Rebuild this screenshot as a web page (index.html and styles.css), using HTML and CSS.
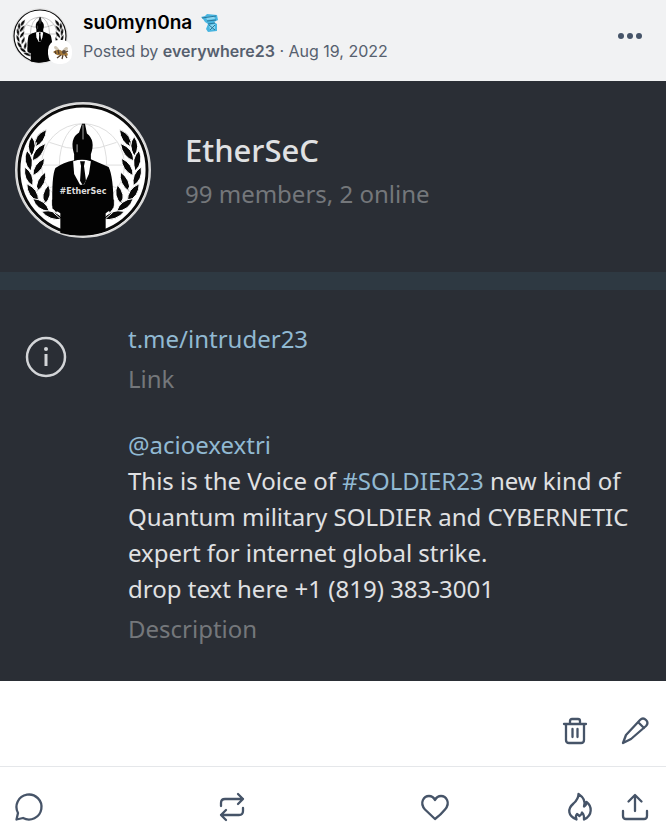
FILE: index.html
```html
<!DOCTYPE html>
<html lang="en">
<head>
    <meta charset="UTF-8">
    <meta name="viewport" content="width=device-width, initial-scale=1">
    <title>su0myn0na</title>
    <link rel="stylesheet" href="styles.css">
</head>
<body>

    <!-- Shared emblem: globe, wreath and suit -->
    <svg class="sprite" aria-hidden="true">
        <symbol id="emblem" viewBox="0 0 140 140">
            <circle cx="70" cy="70" r="68" fill="#fff" stroke="#d8d8d8" stroke-width="2"/>
            <circle cx="70" cy="70" r="65" fill="#fff" stroke="#0b0b0b" stroke-width="3"/>
            <g fill="none" stroke="currentColor" class="globe">
                <circle cx="70" cy="65" r="42"/>
                <ellipse cx="70" cy="65" rx="24" ry="42"/>
                <path d="M28 65h84M36 42q34 14 68 0M36 88q34-14 68 0M70 23v84"/>
            </g>
            <g id="laurel" fill="#080808" stroke="#fff" stroke-width="1">
                <path d="M33 29q-13 5-12 18q11-5 12-18z"/>
                <path d="M18 36q-7 10 0 20q7-11 0-20z"/>
                <path d="M32 43q-13 5-14 18q12-4 14-18z"/>
                <path d="M13 50q-5 12 4 21q5-12-4-21z"/>
                <path d="M31 58q-12 6-12 18q12-6 12-18z"/>
                <path d="M11 67q-2 13 8 19q2-12-8-19z"/>
                <path d="M32 72q-11 8-9 20q11-8 9-20z"/>
                <path d="M13 84q0 13 12 18q0-13-12-18z"/>
                <path d="M35 85q-9 10-4 20q9-9 4-20z"/>
                <path d="M19 99q4 12 17 13q-4-12-17-13z"/>
                <path d="M40 96q-5 10 3 18q6-10-3-18z"/>
                <path d="M28 112q8 10 22 8q-8-11-22-8z"/>
                <path d="M23 42Q12 70 26 94T54 123" fill="none"/>
            </g>
            <use href="#laurel" transform="translate(140 0) scale(-1 1)"/>
            <path d="M47 134V114L39 109Q38 76 42 68Q50 62 61 60V54Q56 38 66 32L69 23L72 23L74 33Q83 40 78 54V59L96 67Q101 77 101 108L93 114V132Q70 140 47 134z" fill="#030303"/>
            <path d="M60 61q9-3 18 0l-2 13-5 11h-4l-6-11z" fill="#fff"/>
            <path d="M67 61h5l-1 5 2 15-3 5-3-5 1-15z" fill="#050505"/>
            <path d="M70 24v15M64 44v8" stroke="#aaa" stroke-width="1"/>
        </symbol>
    </svg>

    <main class="post">
        <header class="post-header">
            <div class="avatar">
                <svg class="avatar-image" role="img" aria-label="su0myn0na"><use href="#emblem"/></svg>
                <svg class="avatar-badge" viewBox="0 0 24 24" aria-hidden="true">
                    <rect width="24" height="24" rx="10" fill="#fff"/>
                    <path d="M12 11Q8 4 6 7q0 3 6 4M14 11q4-6 6-3q0 3-5 4" fill="#cfc5b4"/>
                    <path d="M5 12q5-4 9-1l4 1q3 2 1 4l-4-1q-5 2-10-3z" fill="#a67a3a"/>
                    <path d="M7 11l1 3M10 10l1 4M13 15l-4 3M15 15l-1 4M17 15l2 3M18 12l2-1" fill="none" stroke="#54402e" stroke-width="1.3"/>
                    <circle cx="16" cy="12" r="2" fill="#5b4938"/>
                </svg>
            </div>
            <div class="post-info">
                <h1 class="blog-name">
                    <a href="#">su0myn0na</a>
                    <svg class="blog-sticker" viewBox="0 0 20 20" aria-hidden="true">
                        <path d="M1 4l4-1 2-2 10 1 1 5-4 2 3 2v7l-9 1-2-3 2-5-3-2-2-3z" fill="#48b5e0"/>
                        <path d="M6 4l8-1 1 3-8 1zM9 12l6-1v5l-5 1z" fill="#8bd6ef"/>
                        <path d="M2 5l14-2M7 8l9-1M8 11l7-1M9 12l6 5M15 12l-5 5" fill="none" stroke="#28789c"/>
                    </svg>
                </h1>
                <p class="byline">Posted by <a href="#">everywhere23</a> · Aug 19, 2022</p>
            </div>
            <button class="icon-button more" type="button" aria-label="More options">
                <svg viewBox="0 0 24 24" class="dots"><circle cx="3" cy="12" r="3"/><circle cx="12" cy="12" r="3"/><circle cx="21" cy="12" r="3"/></svg>
            </button>
        </header>

        <section class="group">
            <div class="group-header">
                <div class="group-picture">
                    <svg role="img" aria-label="EtherSeC"><use href="#emblem"/></svg>
                    <span class="group-tag">#EtherSec</span>
                </div>
                <div>
                    <h2>EtherSeC</h2>
                    <p class="members">99 members, 2 online</p>
                </div>
            </div>
            <div class="group-details">
                <svg class="info-icon" viewBox="0 0 42 42" aria-hidden="true">
                    <circle cx="21" cy="21" r="19" fill="none" stroke="#d3d5d8" stroke-width="2.5"/>
                    <circle cx="21" cy="13" r="2" fill="#d3d5d8"/>
                    <path d="M21 18v12" stroke="#d3d5d8" stroke-width="3"/>
                </svg>
                <div class="details-text">
                    <p><a href="#">t.me/intruder23</a></p>
                    <p class="caption">Link</p>
                    <p class="description"><a href="#">@acioexextri</a><br>
                    This is the Voice of <a href="#">#SOLDIER23</a> new kind of Quantum military SOLDIER and CYBERNETIC expert for internet global strike.<br>
                    drop text here +1 (819) 383-3001</p>
                    <p class="caption">Description</p>
                </div>
            </div>
        </section>

        <div class="owner-actions">
            <button class="icon-button" type="button" aria-label="Delete">
                <svg viewBox="0 0 28 28"><path d="M3 7h22M9 7V4q0-2 2-2h6q2 0 2 2v3M5 7v16q0 3 3 3h12q3 0 3-3V7M11.500 12v8M16.500 12v8"/></svg>
            </button>
            <button class="icon-button" type="button" aria-label="Edit">
                <svg viewBox="0 0 28 28"><path d="M2 26l3-8L19 3q3-3 6 0t0 6L10 22zM17 5l6 6"/></svg>
            </button>
        </div>

        <footer class="post-actions">
            <button class="icon-button" type="button" aria-label="Reply">
                <svg viewBox="0 0 28 28"><path d="M1.500 26.500L3 20A12.500 12.500 0 1 1 8 25z"/></svg>
            </button>
            <button class="icon-button" type="button" aria-label="Reblog">
                <svg viewBox="0 0 28 28"><path d="M3 13v-3q0-4 4-4h18M20 1l5 5-5 5M25 15v3q0 4-4 4H3M8 17l-5 5 5 5"/></svg>
            </button>
            <button class="icon-button" type="button" aria-label="Like">
                <svg viewBox="0 0 28 28"><path d="M14 26L4 16.500C-2 9.500 3 3 8 3q4 0 6 4q2-4 6-4c5 0 10 6.500 4 13.500Q20 21.500 14 26z"/></svg>
            </button>
            <div class="action-pair">
                <button class="icon-button" type="button" aria-label="Blaze">
                    <svg viewBox="0 0 28 28"><path d="M12.500 1C17 4 20 8 18 13.500Q20.500 12 20.500 9C26 13 27 22 18 26.500Q18.500 22 16 19.500Q15.500 22 13.500 23L11 21Q9 23 10.500 26.500C2 23 1 16 7.500 10.500Q12.500 6 12.500 1z"/></svg>
                </button>
                <button class="icon-button" type="button" aria-label="Share">
                    <svg viewBox="0 0 28 28"><path d="M14 18V3M7.500 8.500L14 2l6.500 6.500M2 18v5q0 3 3 3h18q3 0 3-3v-5"/></svg>
                </button>
            </div>
        </footer>
    </main>

</body>
</html>
```
FILE: styles.css
```css
* {
    box-sizing: border-box;
}

body {
    margin: 0;
    background-color: #ffffff;
    font-family: Inter, "Liberation Sans", sans-serif;
}

h1, h2, p {
    margin: 0;
}

a {
    color: inherit;
    text-decoration: none;
}

.sprite {
    position: absolute;
    width: 0;
    height: 0;
}

.globe {
    stroke-width: 1;
}

/* --- Post header --- */
.post-header {
    display: flex;
    align-items: flex-start;
    padding: 8px 16px 17px 12px;
    background-color: #f1f2f3;
}

.avatar {
    position: relative;
    width: 56px;
    height: 56px;
    margin-right: 15px;
}

.avatar-image {
    display: block;
    width: 56px;
    height: 56px;
    color: #777;
}

.avatar-badge {
    position: absolute;
    right: -4px;
    bottom: 0;
    width: 24px;
    height: 24px;
}

.post-info {
    flex: 1;
}

.blog-name {
    display: flex;
    align-items: center;
    gap: 8px;
    font-size: 19px;
    font-weight: 600;
    line-height: 30px;
    color: #000;
}

.blog-sticker {
    width: 20px;
    height: 20px;
}

.byline {
    font-size: 16px;
    line-height: 26px;
    color: #56606e;
}

.byline a {
    font-weight: 600;
}

/* --- Icon buttons --- */
.icon-button {
    display: flex;
    justify-self: start;
    padding: 0;
    border: 0;
    background: none;
    cursor: pointer;
}

.icon-button svg {
    width: 28px;
    height: 28px;
    overflow: visible;
    fill: none;
    stroke: #465468;
    stroke-width: 2.3;
    stroke-linecap: round;
    stroke-linejoin: round;
}

.more {
    padding-top: 16px;
    margin-right: 8px;
}

.icon-button .dots {
    width: 24px;
    height: 24px;
    fill: #465468;
    stroke: none;
}

/* --- Group card --- */
.group {
    background-color: #2a2e35;
    color: #e0e1e3;
    font-family: "Noto Sans", "Open Sans", sans-serif;
    font-size: 24px;
    line-height: 36px;
}

.group-header {
    display: flex;
    align-items: center;
    gap: 33px;
    padding: 20px 14px 33px;
    border-bottom: 18px solid #2e3942;
}

.group-picture {
    position: relative;
    width: 138px;
    height: 138px;
}

.group-picture svg {
    display: block;
    width: 138px;
    height: 138px;
    color: #ddd;
}

.group-tag {
    position: absolute;
    top: 85px;
    left: 0;
    width: 100%;
    font: bold 8px/12px "DejaVu Sans", sans-serif;
    text-align: center;
    color: #ddd;
}

.group h2 {
    margin-bottom: 4px;
    font-size: 31px;
    font-weight: 500;
    line-height: 44px;
}

.group .members,
.caption {
    color: #74777b;
}

.group-details {
    display: flex;
    align-items: flex-start;
    padding: 31px 24px 34px 25px;
}

.info-icon {
    flex: none;
    width: 42px;
    height: 42px;
    margin: 15px 61px 0 0;
}

.group-details a {
    color: #91b9d2;
}

.caption {
    margin-top: 4px;
}

.description {
    margin-top: 30px;
}

/* --- Actions below the post --- */
.owner-actions {
    display: flex;
    justify-content: flex-end;
    gap: 32px;
    padding: 36px 17px 21px;
    border-bottom: 1px solid #e5e7ea;
}

.post-actions {
    display: grid;
    grid-template-columns: 32% 32% 1fr auto;
    padding: 26px 17px 11px 15px;
}

.action-pair {
    display: flex;
    gap: 27px;
}
```
